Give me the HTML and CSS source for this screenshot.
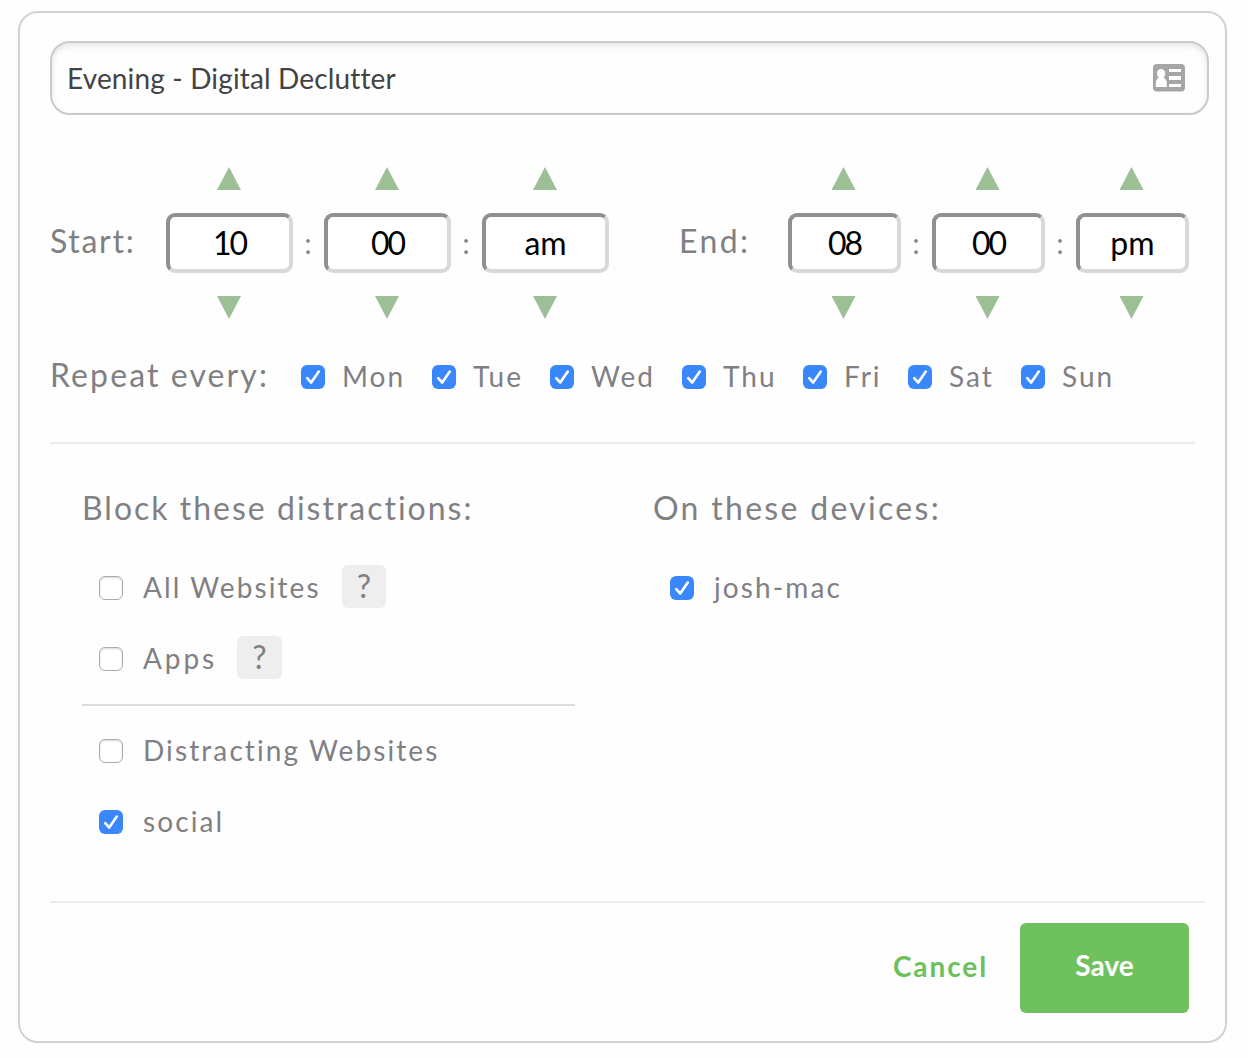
FILE: index.html
```
<!DOCTYPE html>
<html lang="en">
<head>
<meta charset="utf-8">
<title>Edit session</title>
<link rel="stylesheet" href="styles.css">
</head>
<body>
<form class="card">
  <div class="name-field">
    <span class="name-text">Evening - Digital Declutter</span>
    <svg class="contact-icon" width="32" height="28" viewBox="0 0 32 28">
      <rect width="32" height="27.500" rx="4" fill="#a6a6a6"/>
      <path d="M8 5c-2.500 0-4 1.700-4 4.200 0 1.800.7 3.200 1.800 4.300C3.800 14.500 2.800 17 2.800 20v3h11v-3c0-3-1.200-5.500-3.200-6.500 1-1.100 1.600-2.500 1.600-4.300C12.200 6.700 10.500 5 8 5z" fill="#fff"/>
      <path d="M16 5h12v3H16zM16 12h12v4H16zM16 20h12v3H16z" fill="#fff"/>
    </svg>
  </div>

  <div class="times">
    <span class="label start-label">Start:</span>
    <div class="picker start">
      <div class="spin"><i class="up"></i><span class="box digits">10</span><i class="down"></i></div>
      <span class="colon">:</span>
      <div class="spin"><i class="up"></i><span class="box digits">00</span><i class="down"></i></div>
      <span class="colon">:</span>
      <div class="spin"><i class="up"></i><span class="box">am</span><i class="down"></i></div>
    </div>
    <span class="label end-label">End:</span>
    <div class="picker end">
      <div class="spin"><i class="up"></i><span class="box digits">08</span><i class="down"></i></div>
      <span class="colon">:</span>
      <div class="spin"><i class="up"></i><span class="box digits">00</span><i class="down"></i></div>
      <span class="colon">:</span>
      <div class="spin"><i class="up"></i><span class="box">pm</span><i class="down"></i></div>
    </div>
  </div>

  <div class="repeat">
    <span class="label repeat-label">Repeat every:</span>
    <label class="day"><span class="check on"><svg viewBox="0 0 24 24"><path d="M6.200 13.200l4 4.300L17.800 6.500"/></svg></span><span class="day-text">Mon</span></label>
    <label class="day"><span class="check on"><svg viewBox="0 0 24 24"><path d="M6.200 13.200l4 4.300L17.800 6.500"/></svg></span><span class="day-text">Tue</span></label>
    <label class="day"><span class="check on"><svg viewBox="0 0 24 24"><path d="M6.200 13.200l4 4.300L17.800 6.500"/></svg></span><span class="day-text">Wed</span></label>
    <label class="day"><span class="check on"><svg viewBox="0 0 24 24"><path d="M6.200 13.200l4 4.300L17.800 6.500"/></svg></span><span class="day-text">Thu</span></label>
    <label class="day"><span class="check on"><svg viewBox="0 0 24 24"><path d="M6.200 13.200l4 4.300L17.800 6.500"/></svg></span><span class="day-text">Fri</span></label>
    <label class="day"><span class="check on"><svg viewBox="0 0 24 24"><path d="M6.200 13.200l4 4.300L17.800 6.500"/></svg></span><span class="day-text">Sat</span></label>
    <label class="day"><span class="check on"><svg viewBox="0 0 24 24"><path d="M6.200 13.200l4 4.300L17.800 6.500"/></svg></span><span class="day-text">Sun</span></label>
  </div>

  <div class="columns">
    <section class="blocks">
      <h2 class="label heading">Block these distractions:</h2>
      <label class="option"><span class="check"></span><span class="option-text websites">All Websites</span><span class="help">?</span></label>
      <label class="option"><span class="check"></span><span class="option-text apps">Apps</span><span class="help">?</span></label>
      <div class="rule"></div>
      <label class="option"><span class="check"></span><span class="option-text">Distracting Websites</span></label>
      <label class="option"><span class="check on"><svg viewBox="0 0 24 24"><path d="M6.200 13.200l4 4.300L17.800 6.500"/></svg></span><span class="option-text">social</span></label>
    </section>
    <section class="devices">
      <h2 class="label heading">On these devices:</h2>
      <label class="option"><span class="check on"><svg viewBox="0 0 24 24"><path d="M6.200 13.200l4 4.300L17.800 6.500"/></svg></span><span class="option-text">josh-mac</span></label>
    </section>
  </div>

  <div class="actions">
    <span class="cancel">Cancel</span>
    <span class="save">Save</span>
  </div>
</form>
</body>
</html>
```
FILE: styles.css
```
* { box-sizing: border-box; }
body {
  margin: 0;
  padding: 11px 0 0 18px;
  background: #fefefe;
  color: #808084;
  font-family: Lato, sans-serif;
  font-size: 28px;
  font-variant-ligatures: none;
}
.card {
  width: 1209px;
  height: 1032px;
  padding: 28px 16px 0 30px;
  border: 2px solid #d2d2d2;
  border-radius: 20px;
  background: #fefefe;
}
.name-field {
  display: flex;
  align-items: center;
  justify-content: space-between;
  height: 74px;
  padding: 0 22px 0 15px;
  border: 2px solid #cacaca;
  border-radius: 20px;
  box-shadow: inset 0 3px 6px rgba(0, 0, 0, .1);
  color: #434345;
}
.name-text { letter-spacing: .15px; }
.contact-icon { display: block; }
.label {
  font-size: 32px;
  font-weight: 400;
  letter-spacing: 2px;
  line-height: 40px;
  white-space: nowrap;
}
.times {
  display: flex;
  height: 152px;
  margin-top: 52px;
}
.times .label { padding-top: 54px; }
.times .start-label {
  width: 116px;
  letter-spacing: 1.700px;
}
.times .end-label {
  width: 109px;
  margin-left: 70px;
  letter-spacing: 2.400px;
}
.picker { display: flex; }
.spin {
  display: flex;
  flex-direction: column;
  align-items: center;
}
.start .spin { width: 127px; }
.end .spin { width: 113px; }
.up, .down {
  width: 24px;
  height: 23px;
  background: #9dbf96;
  margin-right: 1px;
}
.end .up, .end .down { margin-right: 2px; }
.up { clip-path: polygon(50% 0, 100% 100%, 0 100%); }
.down { clip-path: polygon(0 0, 100% 0, 50% 100%); }
.box {
  width: 100%;
  height: 60px;
  margin: 23px 0;
  border: 4px solid;
  border-color: #909090 #d9d9d9 #d9d9d9 #909090;
  border-radius: 9px;
  background: #fff;
  color: #000;
  font-size: 32px;
  line-height: 52px;
  text-align: center;
}
.digits { letter-spacing: -2px; }
.colon {
  width: 31px;
  padding: 56px 1px 0 0;
  line-height: 40px;
  text-align: center;
}
.repeat {
  display: grid;
  grid-template-columns: 251px 131px 118px 132px 121px 105px 113px 1fr;
  align-items: center;
  width: 1145px;
  height: 125px;
  padding-bottom: 8px;
  border-bottom: 2px solid #ececec;
}
.repeat-label {
  padding-bottom: 3px;
  letter-spacing: 2.100px;
}
.day {
  display: flex;
  align-items: center;
  gap: 17px;
  letter-spacing: 2px;
}
.day-text, .option-text { padding-bottom: 2px; }
.check {
  flex: none;
  width: 24px;
  height: 24px;
  border: 1.500px solid #ababab;
  border-radius: 6px;
  background: #fff;
  box-shadow: inset 0 1px 2px rgba(0, 0, 0, .15);
}
.check.on {
  border: 0;
  background: #3a87fb;
  box-shadow: none;
}
.check svg {
  display: block;
  fill: none;
  stroke: #fff;
  stroke-width: 2.600;
  stroke-linecap: round;
  stroke-linejoin: round;
}
.columns {
  display: grid;
  grid-template-columns: 571px 1fr;
  width: 1155px;
  height: 459px;
  padding: 44px 0 0 32px;
  border-bottom: 2px solid #ececec;
}
.heading { margin: 0 0 24px; }
.devices .heading { letter-spacing: 2.300px; }
.option {
  display: flex;
  align-items: center;
  height: 71px;
  padding-left: 17px;
  letter-spacing: 2.100px;
}
.option-text {
  margin-left: 20px;
  white-space: nowrap;
}
.websites { width: 199px; }
.apps {
  width: 94px;
  letter-spacing: 2.900px;
}
.help {
  width: 44px;
  height: 43px;
  margin-top: -3px;
  border-radius: 6px;
  background: #eee;
  font-size: 32px;
  line-height: 41px;
  text-align: center;
  letter-spacing: 0;
}
.apps + .help { width: 45px; }
.rule {
  width: 493px;
  height: 2px;
  margin: 10px 0 9px;
  background: #dcdcdc;
}
.actions {
  display: flex;
  justify-content: flex-end;
  align-items: center;
  gap: 32px;
  padding: 20px 20px 0 0;
  font-weight: 700;
}
.cancel {
  padding-bottom: 5px;
  color: #6dc05c;
  letter-spacing: 1.900px;
}
.save {
  width: 169px;
  height: 90px;
  border-radius: 6px;
  background: #6fc15e;
  color: #fff;
  line-height: 85px;
  text-align: center;
}
```
